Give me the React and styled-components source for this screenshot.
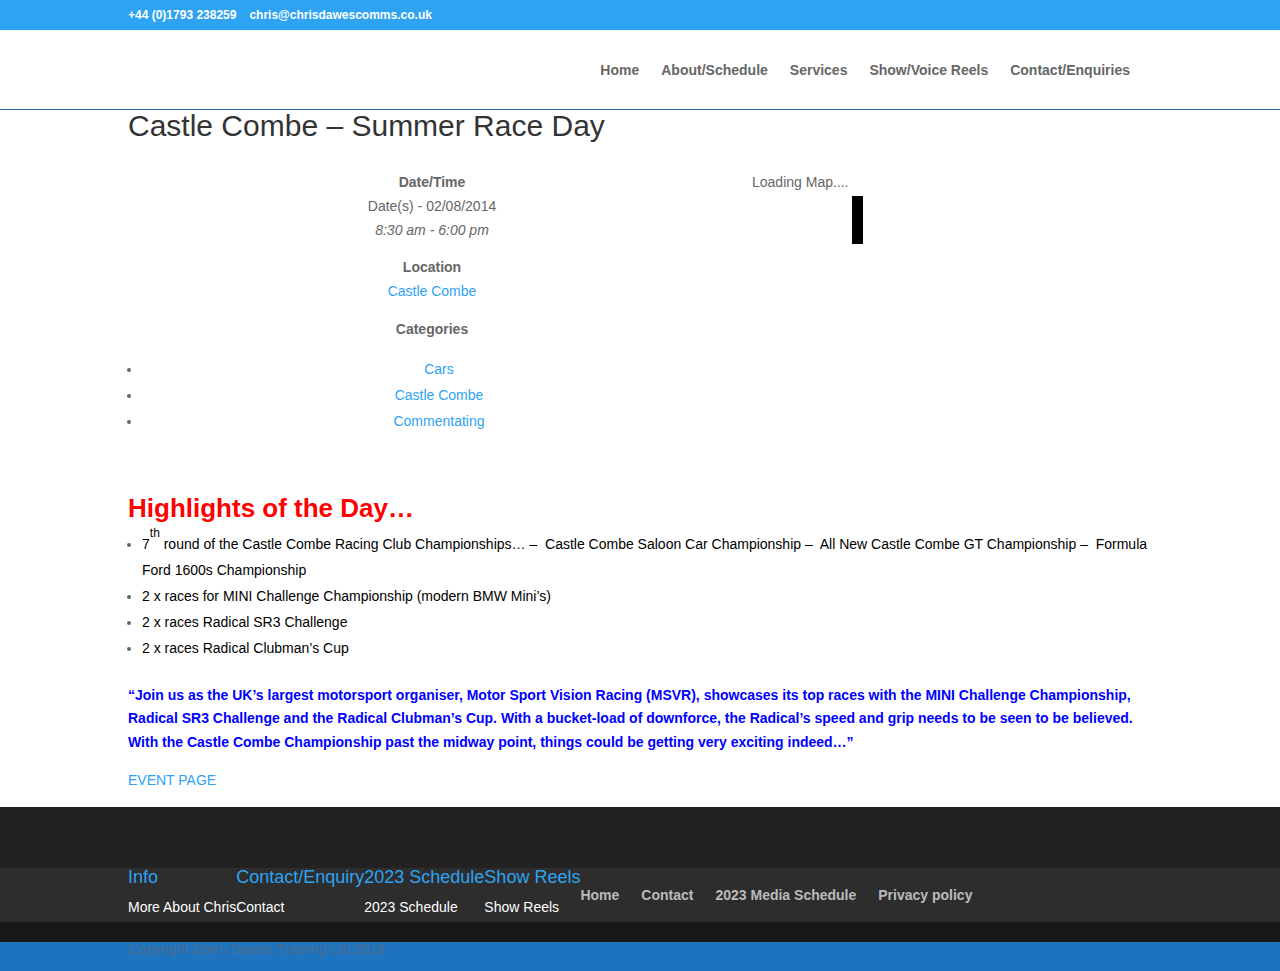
import styled, { createGlobalStyle } from "styled-components";

const GlobalStyle = createGlobalStyle`
  html, body {
    margin: 0;
    padding: 0;
    background: #ffffff;
  }
  body {
    font-family: "Liberation Sans", Arial, sans-serif;
    font-size: 14px;
    color: #666;
  }
  a {
    text-decoration: none;
  }
`;

const Container = styled.div`
  width: 1024px;
  margin: 0 auto;
`;

/* TOP BAR */
const TopBar = styled.div`
  background: #2ea3f2;
  height: 30px;
`;

const TopInner = styled(Container)`
  display: flex;
  align-items: center;
  gap: 13px;
  height: 30px;
  color: #fff;
  font-size: 12px;
  font-weight: bold;
`;

/* HEADER */
const Header = styled.header`
  height: 79px;
  border-bottom: 1px solid #2a6eb0;
  background: #fff;
`;

const HeaderInner = styled(Container)`
  display: flex;
  justify-content: flex-end;
  align-items: center;
  height: 79px;
`;

const NavLink = styled.a`
  color: #666;
  font-weight: bold;
  font-size: 14px;
  padding-right: 22px;
`;

/* CONTENT */
const Title = styled.h1`
  margin: 0;
  padding: 1px 0 30px;
  font-size: 30px;
  line-height: 30px;
  font-weight: normal;
  color: #333;
`;

const EventRow = styled.div`
  display: flex;
`;

const DetailsCol = styled.div`
  flex: 0 0 608px;
`;

const MapCol = styled.div`
  margin-left: auto;
  width: 400px;
`;

const P = styled.p`
  margin: 0;
  padding-bottom: 14px;
  line-height: 23.8px;
  text-align: ${(p) => (p.$center ? "center" : "left")};
`;

const Label = styled.strong`
  display: block;
`;

const Line = styled.span`
  display: block;
  font-style: ${(p) => (p.$italic ? "italic" : "normal")};
`;

const Link = styled.a`
  color: #2ea3f2;
`;

const MapBar = styled.div`
  width: 11px;
  height: 48px;
  margin: -13px 0 0 100px;
  background: #000;
`;

const List = styled.ul`
  margin: 0;
  padding: 0 0 23px 14px;
`;

const Item = styled.li`
  line-height: 26px;
  color: #666;
  text-align: ${(p) => (p.$center ? "center" : "left")};
`;

const Black = styled.span`
  color: #000;
`;

const Sup = styled.sup`
  font-size: 12px;
  vertical-align: baseline;
  position: relative;
  top: -12px;
  line-height: 0;
`;

const Spacer = styled.div`
  height: 37.8px;
`;

const Highlight = styled.h2`
  margin: 0;
  padding-bottom: 10px;
  font-size: 26px;
  line-height: 26px;
  font-weight: bold;
  color: #ff0000;
`;

const Quote = styled.p`
  margin: 0;
  padding-bottom: 15px;
  line-height: 23.5px;
  font-weight: bold;
  color: #0000ff;
`;

/* FOOTER */
const FooterTop = styled.div`
  background: #222;
  height: 61px;
`;

const FooterBand = styled.div`
  background: #2d2d2d;
  height: 54px;
`;

const BandInner = styled(Container)`
  display: flex;
  align-items: center;
  height: 54px;
`;

const Widgets = styled.div`
  display: flex;
  align-self: flex-start;
`;

const Widget = styled.div`
  display: flex;
  flex-direction: column;
`;

const WidgetTitle = styled.h4`
  margin: 0;
  padding-bottom: 10px;
  font-size: 18px;
  line-height: 18px;
  font-weight: normal;
  color: #2ea3f2;
  white-space: nowrap;
`;

const WidgetText = styled.span`
  color: #fff;
  line-height: 23.8px;
  white-space: nowrap;
`;

const BottomNav = styled.nav`
  display: flex;
  gap: 22px;
`;

const BottomLink = styled.a`
  color: #bbb;
  font-weight: bold;
  font-size: 14px;
  white-space: nowrap;
`;

const FooterDark = styled.div`
  background: #171717;
  height: 20px;
`;

const FooterBlue = styled.div`
  background: #1e73be;
  height: 29px;
`;

const Copyright = styled(Container)`
  color: #4b6d8f;
  line-height: 14px;
`;

const navItems = ["Home", "About/Schedule", "Services", "Show/Voice Reels", "Contact/Enquiries"];
const categories = ["Cars", "Castle Combe", "Commentating"];
const widgets = [
  { title: "Info", text: "More About Chris" },
  { title: "Contact/Enquiry", text: "Contact" },
  { title: "2023 Schedule", text: "2023 Schedule" },
  { title: "Show Reels", text: "Show Reels" },
];
const footerNav = ["Home", "Contact", "2023 Media Schedule", "Privacy policy"];

export default function App() {
  return (
    <>
      <GlobalStyle />
      <TopBar>
        <TopInner>
          <span>+44 (0)1793 238259</span>
          <span>chris@chrisdawescomms.co.uk</span>
        </TopInner>
      </TopBar>

      <Header>
        <HeaderInner>
          {navItems.map((n) => (
            <NavLink key={n} href="#">{n}</NavLink>
          ))}
        </HeaderInner>
      </Header>

      <Container>
        <Title>Castle Combe – Summer Race Day</Title>

        <EventRow>
          <DetailsCol>
            <P $center>
              <Label>Date/Time</Label>
              <Line>Date(s) - 02/08/2014</Line>
              <Line $italic>8:30 am - 6:00 pm</Line>
            </P>
            <P $center>
              <Label>Location</Label>
              <Link href="#">Castle Combe</Link>
            </P>
            <P $center>
              <Label>Categories</Label>
            </P>
            <List>
              {categories.map((c) => (
                <Item key={c} $center>
                  <Link href="#">{c}</Link>
                </Item>
              ))}
            </List>
          </DetailsCol>
          <MapCol>
            <P>Loading Map....</P>
            <MapBar />
          </MapCol>
        </EventRow>

        <Spacer />
        <Highlight>Highlights of the Day…</Highlight>
        <List>
          <Item>
            <Black>
              7<Sup>th</Sup> round of the Castle Combe Racing Club Championships… –{"\u00a0"} Castle Combe Saloon
              Car Championship –{"\u00a0"} All New Castle Combe GT Championship –{"\u00a0"} Formula Ford 1600s
              Championship
            </Black>
          </Item>
          <Item><Black>2 x races for MINI Challenge Championship (modern BMW Mini’s)</Black></Item>
          <Item><Black>2 x races Radical SR3 Challenge</Black></Item>
          <Item><Black>2 x races Radical Clubman’s Cup</Black></Item>
        </List>

        <Quote>
          “Join us as the UK’s largest motorsport organiser, Motor Sport Vision Racing (MSVR), showcases its top
          races with the MINI Challenge Championship, Radical SR3 Challenge and the Radical Clubman’s Cup. With a
          bucket-load of downforce, the Radical’s speed and grip needs to be seen to be believed. With the Castle
          Combe Championship past the midway point, things could be getting very exciting indeed…”
        </Quote>
        <P>
          <Link href="#">EVENT PAGE</Link>
        </P>
      </Container>

      <footer>
        <FooterTop />
        <FooterBand>
          <BandInner>
            <Widgets>
              {widgets.map((w) => (
                <Widget key={w.title}>
                  <WidgetTitle>{w.title}</WidgetTitle>
                  <WidgetText>{w.text}</WidgetText>
                </Widget>
              ))}
            </Widgets>
            <BottomNav>
              {footerNav.map((f) => (
                <BottomLink key={f} href="#">{f}</BottomLink>
              ))}
            </BottomNav>
          </BandInner>
        </FooterBand>
        <FooterDark />
        <FooterBlue>
          <Copyright>Copyright Open Dawes Training Ltd 2019</Copyright>
        </FooterBlue>
      </footer>
    </>
  );
}
